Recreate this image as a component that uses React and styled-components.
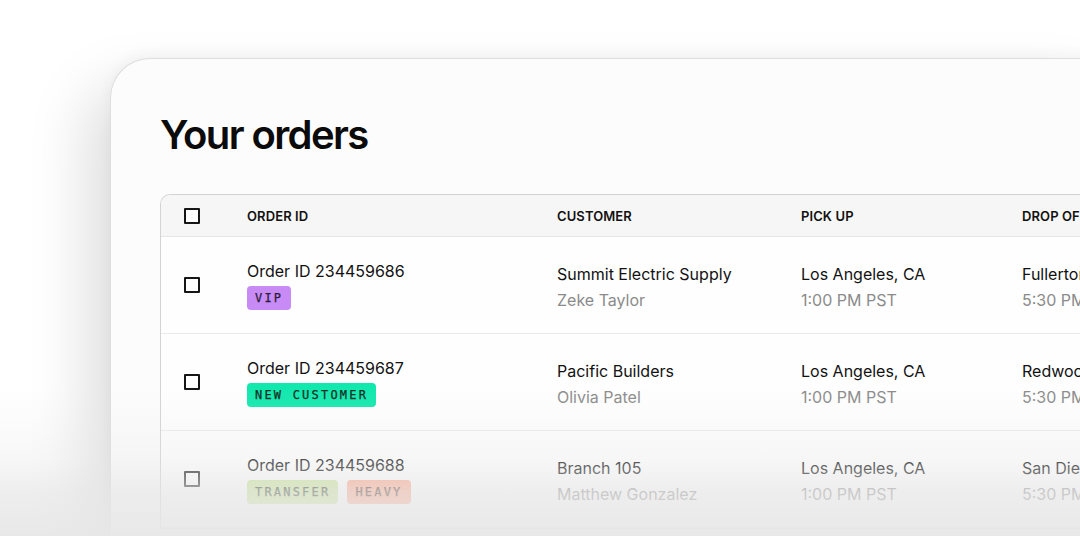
import React from "react";
import styled, { createGlobalStyle } from "styled-components";

const GlobalStyle = createGlobalStyle`
  html, body {
    margin: 0;
    padding: 0;
    background: #ffffff;
    overflow: hidden;
  }
  body {
    font-family: Inter, "Noto Sans", sans-serif;
    color: #111;
    -webkit-font-smoothing: antialiased;
  }
`;

const Stage = styled.div`
  position: relative;
  height: 536px;
  padding: 58px 0 0 110px;
  box-sizing: border-box;
  overflow: hidden;
`;

const Card = styled.div`
  width: 1000px;
  height: 520px;
  box-sizing: border-box;
  padding: 55px 0 0 49px;
  background: #fcfcfc;
  border: 1.5px solid #dedede;
  border-right: none;
  border-radius: 40px 0 0 0;
  box-shadow: -24px 28px 60px rgba(0, 0, 0, 0.13),
    0 -4px 14px rgba(0, 0, 0, 0.04);
`;

const Title = styled.h1`
  margin: 0 0 38px;
  font-size: 40px;
  line-height: 42px;
  font-weight: 600;
  letter-spacing: -1.6px;
  color: #0b0b0b;
`;

const Table = styled.div`
  width: 960px;
  border: 1.5px solid #d3d3d3;
  border-right: none;
  border-radius: 10px 0 0 0;
  background: #fefefe;
  overflow: hidden;
`;

const Row = styled.div`
  display: grid;
  grid-template-columns: 86px 310px 244px 221px 1fr;
  align-items: center;
  height: ${(p) => (p.head ? "41px" : "96px")};
  background: ${(p) => (p.head ? "#f6f6f6" : "#fefefe")};
  border-bottom: 1.5px solid ${(p) => (p.head ? "#e6e6e6" : "#ebebeb")};
`;

const HeadCell = styled.div`
  font-size: 13px;
  font-weight: 600;
  letter-spacing: 0.1px;
  color: #111;
  white-space: nowrap;
`;

const CheckCell = styled.div`
  display: flex;
  align-items: center;
  padding-left: 23px;
`;

const Checkbox = styled.span`
  display: block;
  width: 16px;
  height: 16px;
  box-sizing: border-box;
  border: 2px solid #161616;
  border-radius: 1px;
  background: #fff;
`;

const Stack = styled.div`
  display: flex;
  flex-direction: column;
  gap: ${(p) => p.gap || 0}px;
  white-space: nowrap;
  padding-top: ${(p) => p.shift || 0}px;
`;

const Main = styled.span`
  font-size: 16px;
  line-height: 22px;
  color: #121212;
`;

const Sub = styled.span`
  font-size: 16px;
  line-height: 22px;
  color: #8b8b8b;
`;

const Tags = styled.div`
  display: flex;
  gap: 9px;
`;

const Tag = styled.span`
  display: inline-flex;
  align-items: center;
  height: 24px;
  padding: 0 8px;
  border-radius: 4px;
  background: ${(p) => p.bg};
  color: ${(p) => p.fg || "#1d1d1d"};
  font-family: "DejaVu Sans Mono", "Liberation Mono", monospace;
  font-size: 12px;
  font-weight: 400;
  letter-spacing: 2.2px;
  -webkit-text-stroke: 0.25px currentColor;
`;

const Fade = styled.div`
  position: absolute;
  left: 0;
  right: 0;
  bottom: 0;
  height: 150px;
  pointer-events: none;
  background: linear-gradient(
    to bottom,
    rgba(230, 230, 230, 0) 0%,
    rgba(230, 230, 230, 0.16) 28%,
    rgba(230, 230, 230, 0.32) 50%,
    rgba(230, 230, 230, 0.68) 70%,
    rgba(231, 231, 231, 0.94) 100%
  );
`;

const orders = [
  {
    id: "234459686",
    tags: [{ label: "VIP", bg: "#c88bf6", fg: "#2b1d38" }],
    company: "Summit Electric Supply",
    contact: "Zeke Taylor",
    pickup: "Los Angeles, CA",
    pickupTime: "1:00 PM PST",
    drop: "Fullerton, CA",
    dropTime: "5:30 PM PST",
  },
  {
    id: "234459687",
    tags: [{ label: "NEW CUSTOMER", bg: "#10e8ad", fg: "#0c2a20" }],
    company: "Pacific Builders",
    contact: "Olivia Patel",
    pickup: "Los Angeles, CA",
    pickupTime: "1:00 PM PST",
    drop: "Redwood City, CA",
    dropTime: "5:30 PM PST",
  },
  {
    id: "234459688",
    tags: [
      { label: "TRANSFER", bg: "#c8e596", fg: "#26301a" },
      { label: "HEAVY", bg: "#ffa487", fg: "#3a1d14" },
    ],
    company: "Branch 105",
    contact: "Matthew Gonzalez",
    pickup: "Los Angeles, CA",
    pickupTime: "1:00 PM PST",
    drop: "San Diego, CA",
    dropTime: "5:30 PM PST",
  },
];

const App = () => {
  return (
    <>
      <GlobalStyle />
      <Stage>
        <Card>
          <Title>Your orders</Title>
          <Table>
            <Row head>
              <CheckCell>
                <Checkbox />
              </CheckCell>
              <HeadCell>ORDER ID</HeadCell>
              <HeadCell>CUSTOMER</HeadCell>
              <HeadCell>PICK UP</HeadCell>
              <HeadCell>DROP OFF</HeadCell>
            </Row>
            {orders.map((o) => (
              <Row key={o.id}>
                <CheckCell>
                  <Checkbox />
                </CheckCell>
                <Stack gap={4}>
                  <Main>Order ID {o.id}</Main>
                  <Tags>
                    {o.tags.map((t) => (
                      <Tag key={t.label} bg={t.bg} fg={t.fg}>
                        {t.label}
                      </Tag>
                    ))}
                  </Tags>
                </Stack>
                <Stack gap={4} shift={3}>
                  <Main>{o.company}</Main>
                  <Sub>{o.contact}</Sub>
                </Stack>
                <Stack gap={4} shift={3}>
                  <Main>{o.pickup}</Main>
                  <Sub>{o.pickupTime}</Sub>
                </Stack>
                <Stack gap={4} shift={3}>
                  <Main>{o.drop}</Main>
                  <Sub>{o.dropTime}</Sub>
                </Stack>
              </Row>
            ))}
          </Table>
        </Card>
        <Fade />
      </Stage>
    </>
  );
};

export default App;
